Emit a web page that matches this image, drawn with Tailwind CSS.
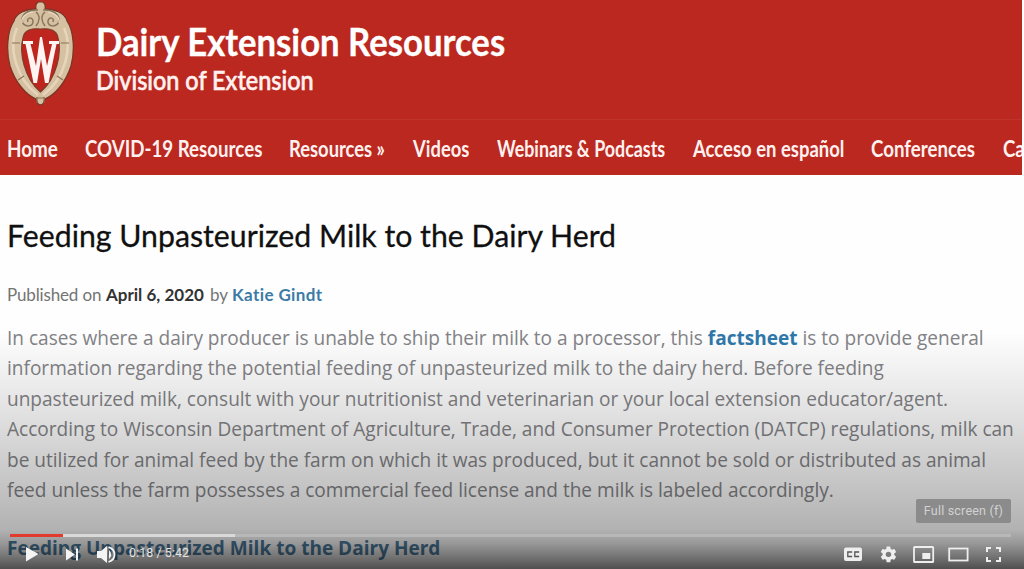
<!DOCTYPE html>
<html lang="en">
<head>
<meta charset="utf-8">
<title>Dairy Extension Resources</title>
<script src="https://cdn.jsdelivr.net/npm/@tailwindcss/browser@4"></script>
</head>
<body class="bg-[#fdfdfd]">
<div class="relative h-[569px] w-[1024px] overflow-hidden bg-[#fefefe] font-['Lato',sans-serif]">
  <header class="mr-[2px] h-[175px] overflow-hidden bg-[#bb281f] text-[#fff1ef]">
    <div class="flex h-[119px] pl-[6px]">
      <svg class="mt-px h-[106px] w-[70px] shrink-0" viewBox="0 0 70 106" fill="none">
        <path d="M34.5 1C38 0 40 4 39 8C49 8 59 12 61 20C68 30 69 50 65 65C60 81 49 94 39 98C38 102 37 104 34.5 104C32 104 31 102 30 98C20 94 9 81 4 65C0 50 1 30 8 20C10 12 20 8 30 8C29 4 31 0 34.5 1Z" fill="#d6c0a2" stroke="#7c3526" stroke-width="1.3"/>
        <path d="M11 27C2 46 10 78 32 94M58 27C67 46 59 78 37 94" stroke="#e6d5bb" stroke-width="2.5"/>
        <path d="M34.5 28C43 27 51 29 52 37C56 51 51 77 34.5 91C18 77 13 51 17 37C18 29 26 27 34.5 28Z" fill="#bd251e" stroke="#7b3d2a" stroke-width="1.2"/>
        <path d="M32 9C22 8 15 14 16 20C18 27 28 26 27 20C26 15 20 17 22 21M37 9C47 8 54 14 53 20C51 27 41 26 42 20C43 15 49 17 47 21M30 11C35 15 33 21 30 25M39 11C34 15 36 21 39 25" stroke="#87755c" stroke-width="1.5"/>
        <path d="M27 11C19 12 15 17 16 22M42 11C50 12 54 17 53 22" stroke="#eddfc6" stroke-width="1.2"/>
        <path d="M6 42H14M63 42H55M12 79L18 75M57 79L51 75M31 96V102M38 96V102M30 97H39" stroke="#8a7052" stroke-width="1.1"/>
        <path d="M17 40H27V43H24.5L30 65L34 36H36L41 65L46 43H43V40H53V43H50.5L42.5 82H39L35 58L31 82H27.5L19.5 43H17Z" fill="#fff4f1"/>
      </svg>
      <div class="ml-[20px] pt-[20px]">
        <div class="origin-left scale-x-[.913] text-[38px] leading-[42px] font-bold whitespace-nowrap text-white [-webkit-text-stroke:.3px]">Dairy Extension Resources</div>
        <div class="origin-left scale-x-[.867] text-[27px] leading-[36px] font-medium whitespace-nowrap [-webkit-text-stroke:.6px]">Division of Extension</div>
      </div>
    </div>
    <nav class="flex h-[56px] border-t border-[#c0332b] pt-[15px] pl-[7px] text-[22px] leading-[28px] font-bold whitespace-nowrap">
      <a class="w-[78px] shrink-0"><span class="inline-block origin-left scale-x-[.857]">Home</span></a>
      <a class="w-[204px] shrink-0"><span class="inline-block origin-left scale-x-[.85]">COVID-19 Resources</span></a>
      <a class="w-[124px] shrink-0"><span class="inline-block origin-left scale-x-[.835]">Resources »</span></a>
      <a class="w-[84px] shrink-0"><span class="inline-block origin-left scale-x-[.836]">Videos</span></a>
      <a class="w-[196px] shrink-0"><span class="inline-block origin-left scale-x-[.812]">Webinars &amp; Podcasts</span></a>
      <a class="w-[178px] shrink-0"><span class="inline-block origin-left scale-x-[.84]">Acceso en español</span></a>
      <a class="w-[132px] shrink-0"><span class="inline-block origin-left scale-x-[.85]">Conferences</span></a>
      <a class="shrink-0"><span class="inline-block origin-left scale-x-[.85]">Ca</span></a>
    </nav>
  </header>
  <main class="pl-[7px] whitespace-nowrap">
    <h1 class="origin-left scale-x-[.976] pt-[40px] text-[31px] leading-[40px] text-[#101010] [-webkit-text-stroke:.3px]">Feeding Unpasteurized Milk to the Dairy Herd</h1>
    <div class="mt-[28px] flex h-[24px] text-[17px] leading-[24px] text-[#747474]">
      <span class="w-[99px] tracking-[-.15px]">Published on</span>
      <span class="w-[104px] font-bold text-[#333]">April 6, 2020</span>
      <span class="w-[22px]">by</span>
      <span class="font-bold tracking-[.4px] text-[#3c7ba5]">Katie Gindt</span>
    </div>
    <p class="mt-[16px] font-['Open_Sans',sans-serif] text-[19.06px] leading-[30.4px] text-[#838387]">In cases where a dairy producer is unable to ship their milk to a processor, this <b class="text-[#2f78ab]">factsheet</b> is to provide general<br>information regarding the potential feeding of unpasteurized milk to the dairy herd. Before feeding<br>unpasteurized milk, consult with your nutritionist and veterinarian or your local extension educator/agent.<br>According to Wisconsin Department of Agriculture, Trade, and Consumer Protection (DATCP) regulations, milk can<br>be utilized for animal feed by the farm on which it was produced, but it cannot be sold or distributed as animal<br>feed unless the farm possesses a commercial feed license and the milk is labeled accordingly.</p>
    <div class="mt-[28px] font-['Open_Sans',sans-serif] text-[19.05px] leading-[30px] font-bold text-[#4c7c9e]">Feeding Unpasteurized Milk to the Dairy Herd</div>
  </main>

  <!-- Player controls over the video frame -->
  <div class="absolute inset-x-0 bottom-0 flex h-[239px] flex-col bg-[linear-gradient(to_bottom,transparent_0,rgba(0,0,0,.04)_30px,rgba(0,0,0,.11)_80px,rgba(0,0,0,.18)_125px,rgba(0,0,0,.25)_170px,rgba(0,0,0,.30)_200px,rgba(0,0,0,.40)_213px,rgba(0,0,0,.55)_227px,rgba(0,0,0,.69)_239px)] font-['Roboto',sans-serif]">
    <div class="mt-[169px] mr-[13px] flex h-[24px] w-[95px] items-center justify-center self-end rounded-[2px] bg-[#8b8b8b] text-[12.5px] tracking-[.2px] text-[#d2d2d2]">Full screen (f)</div>
    <div class="mt-[11px] mr-[13px] ml-[10px] flex h-[3px] shrink-0 bg-white/20">
      <div class="w-[53px] bg-[#e23a2c]"></div>
      <div class="w-[172px] bg-[#d9d9d9]"></div>
    </div>
    <div class="flex h-[32px] items-end">
      <svg class="h-[32px] w-[120px]" viewBox="0 537 120 32" fill="#f4f4f4">
        <path d="M26 547L38.5 554L26 561.5ZM66 548.5L75 554.5L66 560.5ZM76 548.5H78V560.5H76ZM97 551H101L107 546V563L101 558H97Z"/>
        <path d="M109 550Q113.5 554.5 109 559Z"/>
        <path d="M108.5 547.2C116.5 549.5 116.5 559.5 108.5 562" fill="none" stroke="#f4f4f4" stroke-width="1.8"/>
      </svg>
      <div class="ml-[9px] h-[24px] w-[80px] text-[12.4px] leading-[16px] tracking-[.1px] whitespace-nowrap text-[#e4e4e4]">0:18 / 5:42</div>
      <svg class="mr-[14px] ml-auto h-[32px] w-[170px]" viewBox="840 537 170 32" fill="none">
        <rect x="844" y="547.5" width="18" height="13.5" rx="2" fill="#eee"/>
        <path d="M851.5 552.8V552H847.8V556.5H851.5V555.7M858.5 552.8V552H854.8V556.5H858.5V555.7" stroke="#555" stroke-width="1.3"/>
        <g transform="translate(879.1 545) scale(.78)"><path fill="#eee" fill-rule="evenodd" d="M19.43 12.98c.04-.32.07-.64.07-.98s-.03-.66-.07-.98l2.11-1.65c.19-.15.24-.42.12-.64l-2-3.46c-.12-.22-.39-.3-.61-.22l-2.49 1c-.52-.4-1.08-.73-1.69-.98l-.38-2.65A.49.49 0 0 0 14 2h-4c-.25 0-.46.18-.49.42l-.38 2.65c-.61.25-1.17.59-1.69.98l-2.49-1c-.23-.09-.49 0-.61.22l-2 3.46c-.13.22-.07.49.12.64l2.11 1.65c-.04.32-.07.65-.07.98s.03.66.07.98l-2.11 1.65c-.19.15-.24.42-.12.64l2 3.46c.12.22.39.3.61.22l2.49-1c.52.4 1.08.73 1.69.98l.38 2.65c.03.24.24.42.49.42h4c.25 0 .46-.18.49-.42l.38-2.65c.61-.25 1.17-.59 1.69-.98l2.49 1c.23.09.49 0 .61-.22l2-3.46c.12-.22.07-.49-.12-.64l-2.11-1.65zM12 15.5A3.5 3.5 0 1 1 12 8.5a3.5 3.5 0 0 1 0 7z"/></g>
        <rect x="914" y="547" width="19.2" height="15" rx=".6" stroke="#eee" stroke-width="1.8"/>
        <rect x="922.3" y="553" width="8" height="6" fill="#eee"/>
        <rect x="949.2" y="548.5" width="18.4" height="12" stroke="#eee" stroke-width="1.8"/>
        <path d="M987 552V548H991M996 548H1000V552M1000 557V561H996M991 561H987V557" stroke="#eee" stroke-width="2"/>
      </svg>
    </div>
  </div>
</div>
</body>
</html>
